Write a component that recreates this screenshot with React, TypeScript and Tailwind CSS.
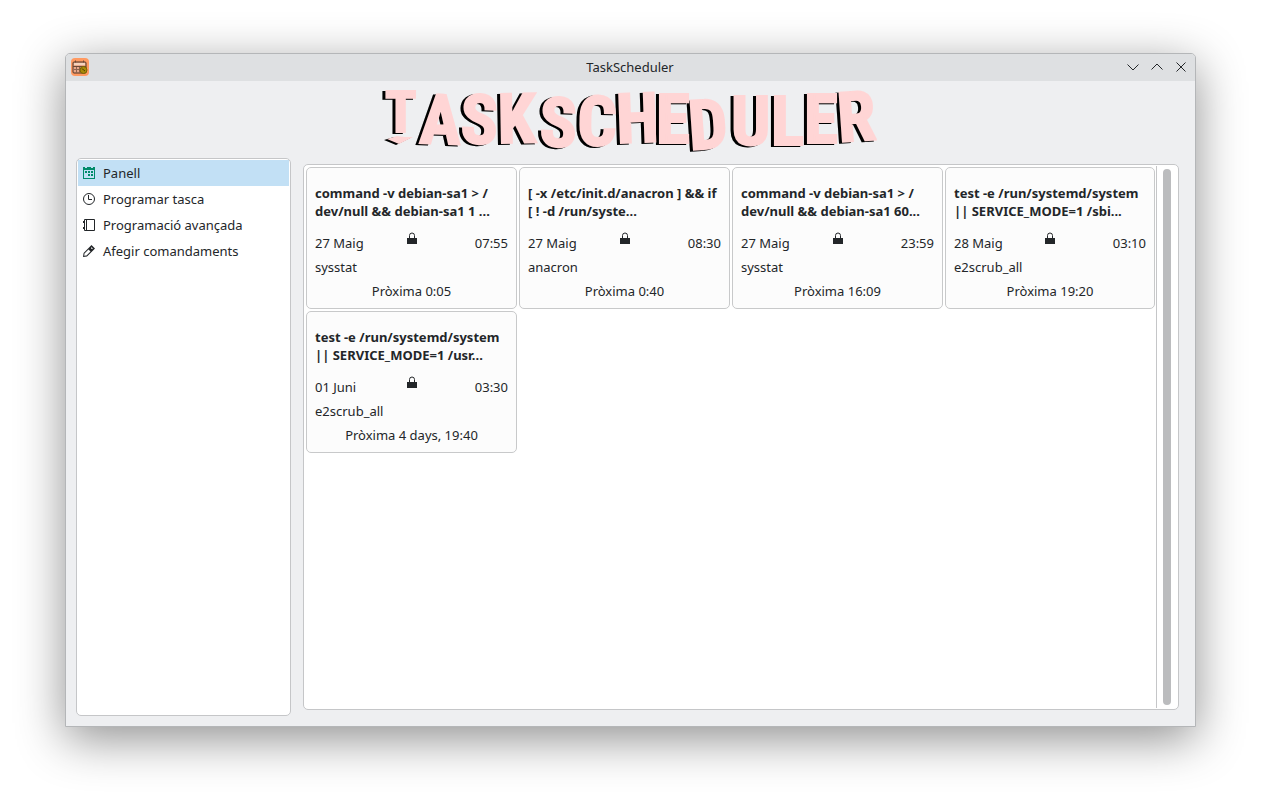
import React, { useState } from "react";

type Task = {
  command: string[];
  date: string;
  time: string;
  owner: string;
  next: string;
};

const tasks: Task[] = [
  {
    command: ["command -v debian-sa1 > /", "dev/null && debian-sa1 1 ..."],
    date: "27 Maig",
    time: "07:55",
    owner: "sysstat",
    next: "Pròxima 0:05",
  },
  {
    command: ["[ -x /etc/init.d/anacron ] && if", "[ ! -d /run/syste..."],
    date: "27 Maig",
    time: "08:30",
    owner: "anacron",
    next: "Pròxima 0:40",
  },
  {
    command: ["command -v debian-sa1 > /", "dev/null && debian-sa1 60..."],
    date: "27 Maig",
    time: "23:59",
    owner: "sysstat",
    next: "Pròxima 16:09",
  },
  {
    command: ["test -e /run/systemd/system", "|| SERVICE_MODE=1 /sbi..."],
    date: "28 Maig",
    time: "03:10",
    owner: "e2scrub_all",
    next: "Pròxima 19:20",
  },
  {
    command: ["test -e /run/systemd/system", "|| SERVICE_MODE=1 /usr..."],
    date: "01 Juni",
    time: "03:30",
    owner: "e2scrub_all",
    next: "Pròxima 4 days, 19:40",
  },
];

const CalendarIcon = () => (
  <svg viewBox="0 0 16 16" className="size-4 text-[#008a6a]" fill="currentColor">
    <path
      fillRule="evenodd"
      d="M2 2h2v1h2V2h4v1h2V2h2v12H2V2zm1 3v8h10V5H3z"
    />
    <path d="M4 6h2v2H4zM7 6h2v2H7zM10 6h2v2h-2zM7 9h2v2H7zM10 9h2v2h-2z" />
  </svg>
);

const ClockIcon = () => (
  <svg viewBox="0 0 16 16" className="size-4" fill="none" stroke="currentColor">
    <circle cx="8" cy="8" r="5.5" />
    <path d="M7.5 4v4.5H11" />
  </svg>
);

const NotebookIcon = () => (
  <svg viewBox="0 0 16 16" className="size-4" fill="none" stroke="currentColor">
    <path d="M3.500 2.500h10v11h-10zM5.500 2.500v11M2 4.500h1.500M2 11.500h1.500M2.500 4v2M2.500 10v2" />
  </svg>
);

const PencilIcon = () => (
  <svg viewBox="0 0 16 16" className="size-4" fill="currentColor">
    <path
      fillRule="evenodd"
      d="M10.500 2L14 5.500 12.300 7.300 6 13.500 2 14l.6-4L8.800 3.700zM3.500 10.500L3.200 12.800 5.500 12.500 9.500 8.500 7.500 6.500zM10.600 4.200L9.800 5l1.200 1.200.8-.8z"
    />
  </svg>
);

const LockIcon = () => (
  <svg viewBox="0 0 10 13" className="h-[13px] w-2.5 shrink-0">
    <path d="M2.500 7V4.500a2.500 2.500 0 0 1 5 0V7" fill="none" stroke="#232629" />
    <path d="M0 7h10v6H0z" fill="#232629" />
  </svg>
);

const AppIcon = () => (
  <svg viewBox="0 0 18 18" className="size-[18px]">
    <rect width="18" height="18" rx="4" fill="#ff9a62" />
    <rect x="2" y="4" width="13" height="11" rx="1" fill="#e8a88a" stroke="#4e3526" />
    <path d="M3 6h11" stroke="#f5d3bd" strokeWidth="2" />
    <path d="M2 8.500h13M4.500 2.500v2M12.500 2.500v2" stroke="#6b4a38" />
    <path d="M3 11.500h8M5.500 9v6M8.500 9v6" stroke="#8f6450" />
    <circle cx="12.500" cy="12" r="3.500" fill="#a88a08" stroke="#7a6400" />
    <path d="M11 10.500l1.500 1.500 1.500 1" fill="none" stroke="#4b3c00" />
  </svg>
);

const Logo = () => (
  <svg
    viewBox="0 0 500 64"
    className="h-16 w-[500px] overflow-visible drop-shadow-[-3px_1px_0_#000]"
    role="img"
    aria-label="TaskScheduler"
  >
    <text
      fill="#ffd5d5"
      stroke="#ffd5d5"
      strokeWidth="2"
      fontFamily="'Roboto Condensed', Roboto, sans-serif"
      fontWeight="700"
      fontSize="69"
      x="4 38 79 117 158 196 236 275 309 350 390 423 458"
      y="43 54 54 54 57 56 54 54 61 56 56 54 53"
      rotate="0 2 2 -1 2 1 -2 0 -4 0 0 0 -4"
    >
      <tspan fontSize="58">T</tspan>ASKSCHEDULER
    </text>
    <path d="M6 50l10-3 8 1h8l-14 7z" fill="#ffd5d5" />
  </svg>
);

const navItems = [
  { label: "Panell", icon: <CalendarIcon /> },
  { label: "Programar tasca", icon: <ClockIcon /> },
  { label: "Programació avançada", icon: <NotebookIcon /> },
  { label: "Afegir comandaments", icon: <PencilIcon /> },
];

const TitleBar = () => (
  <div className="flex h-[27px] items-center bg-[#dee0e2] pb-0.5">
    <div className="flex flex-1 pl-[5px]">
      <AppIcon />
    </div>
    <span>TaskScheduler</span>
    <div className="flex flex-1 justify-end gap-2 pr-1.5">
      <button aria-label="Minimitza">
        <svg viewBox="0 0 16 16" className="size-4" fill="none" stroke="currentColor">
          <path d="M2.500 5.500L8 11l5.500-5.500" />
        </svg>
      </button>
      <button aria-label="Maximitza">
        <svg viewBox="0 0 16 16" className="size-4" fill="none" stroke="currentColor">
          <path d="M2.500 10.500L8 5l5.500 5.500" />
        </svg>
      </button>
      <button aria-label="Tanca">
        <svg viewBox="0 0 16 16" className="size-4" fill="none" stroke="currentColor">
          <path d="M3.500 3.500l9 9M12.500 3.500l-9 9" />
        </svg>
      </button>
    </div>
  </div>
);

const TaskCard = ({ task }: { task: Task }) => (
  <li className="rounded-[5px] border border-[#c8c9ca] bg-[#fcfcfc] px-2 pt-4 pb-[5px]">
    <h2 className="whitespace-nowrap font-bold">
      {task.command[0]}
      <br />
      {task.command[1]}
    </h2>
    <div className="mt-[11px] flex h-6 justify-between leading-6">
      <span className="flex-1">{task.date}</span>
      <LockIcon />
      <span className="flex-1 text-right">{task.time}</span>
    </div>
    <p className="leading-6">{task.owner}</p>
    <p className="text-center leading-6">{task.next}</p>
  </li>
);

const App = () => {
  const [selected, setSelected] = useState(0);
  return (
    <div className="flex min-h-screen bg-white px-[65px] pt-[53px] pb-[77px] font-['Noto_Sans',sans-serif] text-[13px] leading-[18px] text-[#232629]">
      <div className="flex flex-1 flex-col overflow-hidden rounded-t-[5px] border border-[#b4b6b8] bg-[#eeeff1] shadow-[0_12px_48px_rgba(0,0,0,0.44)]">
        <TitleBar />
        <header className="flex h-[77px] justify-center pt-2">
          <Logo />
        </header>
        <div className="flex flex-1 gap-3 pr-4 pb-2.5 pl-2.5">
          <nav className="w-[215px] rounded-[5px] border border-[#c5c6c8] bg-white p-px">
            {navItems.map((item, index) => (
              <button
                key={item.label}
                onClick={() => setSelected(index)}
                className={
                  selected === index
                    ? "flex h-[26px] w-full items-center gap-1.5 bg-[#c2e0f5] pl-[3px]"
                    : "flex h-[26px] w-full items-center gap-1.5 pl-[3px]"
                }
              >
                {item.icon}
                <span>{item.label}</span>
              </button>
            ))}
          </nav>
          <main className="mt-1.5 mb-1.5 flex flex-1 rounded-[5px] border border-[#c5c6c8] bg-white p-px">
            <ul className="grid flex-1 grid-cols-[211fr_211fr_211fr_210fr] content-start gap-0.5 p-px">
              {tasks.map((task, index) => (
                <TaskCard key={index} task={task} />
              ))}
            </ul>
            <div className="flex w-[21px] border-l border-[#c5c6c8] py-[3px] pl-1.5">
              <div className="w-2 rounded-full bg-[#bbbcbe]" />
            </div>
          </main>
        </div>
      </div>
    </div>
  );
};

export default App;
